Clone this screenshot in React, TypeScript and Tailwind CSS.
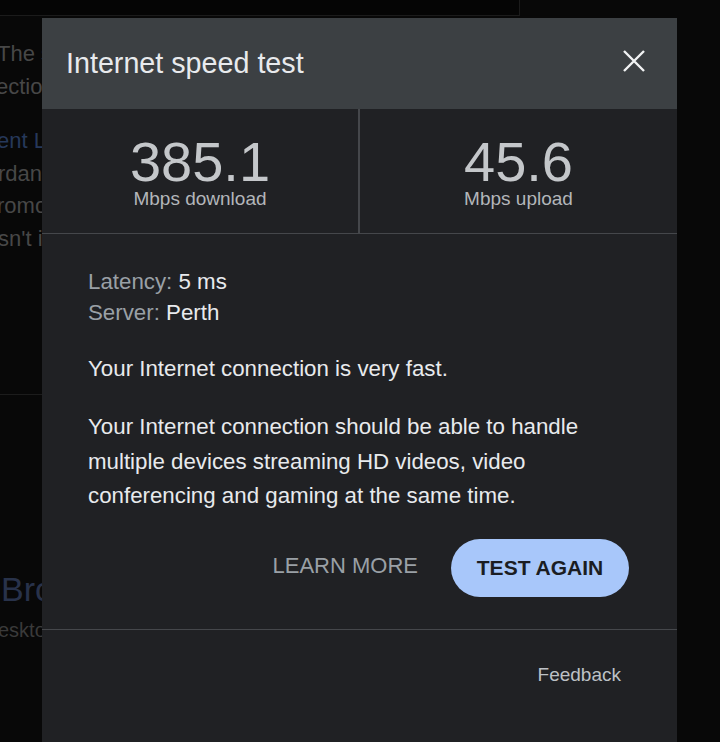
const font = { fontFamily: '"Liberation Sans", Arial, sans-serif' };

function Stat({ value, label, divider }: { value: string; label: string; divider?: boolean }) {
  return (
    <div
      className={
        "flex flex-col items-center pt-[25px] " + (divider ? "border-r-2 border-[#45474b]" : "")
      }
    >
      <div className="text-[56px] leading-[56px] text-[#c4c7ca]">{value}</div>
      <div className="-mt-[1px] text-[19px] leading-[19px] text-[#b3b6ba]">{label}</div>
    </div>
  );
}

export default function App() {
  return (
    <div className="relative h-[742px] w-[720px] overflow-hidden bg-[#080808]" style={font}>
      {/* page behind the dialog */}
      <div className="h-[16px] w-[520px] border-b border-r border-[#1b1b1b] bg-[#050505]" />
      <div className="-ml-[3px] pt-[22px] text-[22px] leading-[32.5px] text-[#474747]">
        <div>The speed test results</div>
        <div className="-ml-[1px]">ections are shown</div>
        <div className="mt-[22px] text-[#26385a]">ent Labs</div>
        <div className="ml-[1px]">rdance with</div>
        <div>romotion</div>
        <div className="ml-[1px]">sn't it</div>
      </div>
      <div className="mt-[139px] h-px w-[520px] bg-[#1c1c1c]" />
      <div className="ml-[1px] mt-[177px] text-[34px] leading-[34px] text-[#28324a]">Browser</div>
      <div className="-ml-[2px] mt-[14px] text-[20px] leading-[20px] text-[#3a3a3a]">esktop</div>

      {/* dialog */}
      <div className="absolute bottom-0 left-[42px] top-[18px] flex w-[635px] flex-col bg-[#202124]">
        <div className="flex h-[91px] items-center justify-between bg-[#3c4043] pl-[24px] pr-[32px]">
          <div className="text-[28.7px] leading-none text-[#e8eaed]">Internet speed test</div>
          <svg width="22" height="22" viewBox="0 0 22 22" className="mb-[5px]">
            <path d="M1 1 L21 21 M21 1 L1 21" stroke="#f1f3f4" strokeWidth="2.4" />
          </svg>
        </div>

        <div className="grid h-[125px] grid-cols-[318px_1fr] border-b border-[#45474b]">
          <Stat value="385.1" label="Mbps download" divider />
          <Stat value="45.6" label="Mbps upload" />
        </div>

        <div className="pl-[46px] pr-[44px] pt-[32px] text-[22.3px]">
          <div className="leading-[31px]">
            <div>
              <span className="text-[#9aa0a6]">Latency: </span>
              <span className="text-[#e8eaed]">5 ms</span>
            </div>
            <div>
              <span className="text-[#9aa0a6]">Server: </span>
              <span className="text-[#e8eaed]">Perth</span>
            </div>
          </div>
          <p className="mt-[23px] leading-[35px] text-[#e8eaed]">
            Your Internet connection is very fast.
          </p>
          <p className="mt-[24px] leading-[34.5px] text-[#e8eaed]">
            Your Internet connection should be able to handle multiple devices streaming HD
            videos, video conferencing and gaming at the same time.
          </p>
        </div>

        <div className="mt-[25px] flex items-center justify-end gap-[33px] pr-[48px]">
          <button className="-mt-[4px] text-[22px] leading-none text-[#9aa0a6]">LEARN MORE</button>
          <button className="flex h-[58px] w-[178px] items-center justify-center rounded-full bg-[#a8c7fa] text-[21px] font-bold leading-none text-[#1b1d22]">
            TEST AGAIN
          </button>
        </div>

        <div className="mt-[32px] border-t border-[#45474b] pr-[56px] pt-[35px] text-right text-[19px] leading-[19px] text-[#bdc1c6]">
          Feedback
        </div>
      </div>
    </div>
  );
}
